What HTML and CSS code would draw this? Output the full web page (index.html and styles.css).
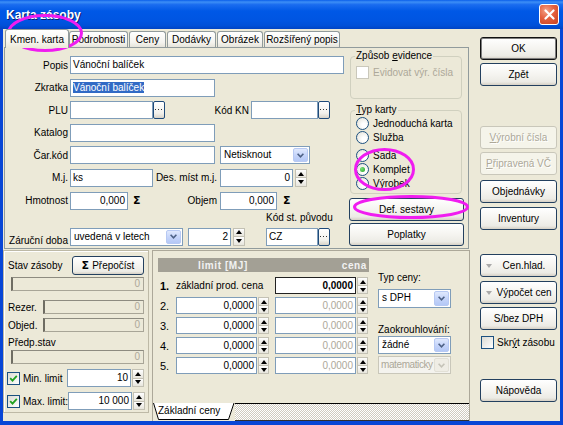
FILE: index.html
```html
<!DOCTYPE html>
<html lang="cs">
<head>
<meta charset="utf-8">
<title>Karta zásoby</title>
<link rel="stylesheet" href="styles.css">
</head>
<body>
<div class="window">
  <div class="titlebar">
    <span class="title">Karta zásoby</span>
    <span class="close"><svg width="11" height="11" viewBox="0 0 11 11"><path d="M1.5 1.5 L9.5 9.5 M9.5 1.5 L1.5 9.5" stroke="#fff" stroke-width="2.2" stroke-linecap="round"/></svg></span>
  </div>
  <div class="client">
    <div class="main">
      <div class="tabs">
        <span class="tab active t1">Kmen. karta</span>
        <span class="tab t2">Podrobnosti</span>
        <span class="tab t3">Ceny</span>
        <span class="tab t4">Dodávky</span>
        <span class="tab t5">Obrázek</span>
        <span class="tab t6">Rozšířený popis</span>
      </div>
      <div class="tabpanel">
        <div class="form">
          <div class="row">
            <span class="lbl">Popis</span>
            <span class="edit w274">Vánoční balíček</span>
          </div>
          <div class="row">
            <span class="lbl">Zkratka</span>
            <span class="edit w145"><span class="sel">Vánoční balíček</span></span>
          </div>
          <div class="row">
            <span class="lbl">PLU</span>
            <span class="edit w83"></span>
            <span class="dots"><svg width="8" height="2" viewBox="0 0 8 2"><rect x="0" y="0" width="1" height="1" fill="#333"/><rect x="3" y="0" width="1" height="1" fill="#333"/><rect x="6" y="0" width="1" height="1" fill="#333"/></svg></span>
            <span class="lbl lbl-kn">Kód KN</span>
            <span class="edit w67"></span>
            <span class="dots"><svg width="8" height="2" viewBox="0 0 8 2"><rect x="0" y="0" width="1" height="1" fill="#333"/><rect x="3" y="0" width="1" height="1" fill="#333"/><rect x="6" y="0" width="1" height="1" fill="#333"/></svg></span>
          </div>
          <div class="row">
            <span class="lbl">Katalog</span>
            <span class="edit w145"></span>
          </div>
          <div class="row">
            <span class="lbl">Čar.kód</span>
            <span class="edit w145"></span>
            <span class="combo w90 ml5"><span class="val">Netisknout</span><span class="dd"><svg width="7" height="5" viewBox="0 0 7 5"><path d="M0.6 0.8 L3.5 3.8 L6.4 0.8" fill="none" stroke="#4D6185" stroke-width="1.6"/></svg></span></span>
          </div>
          <div class="row">
            <span class="lbl">M.j.</span>
            <span class="edit w83">ks</span>
            <span class="lbl lbl-des">Des. míst m.j.</span>
            <span class="edit w73 num">0</span>
            <span class="spin ml2"><i class="up"></i><i class="dn"></i></span>
          </div>
          <div class="row">
            <span class="lbl">Hmotnost</span>
            <span class="edit w58 num">0,000</span>
            <span class="sigma">Σ</span>
            <span class="lbl lbl-obj">Objem</span>
            <span class="edit w57 num">0,000</span>
            <span class="sigma sigma2">Σ</span>
          </div>
          <div class="row row-last">
            <span class="lbl">Záruční doba</span>
            <span class="combo w113"><span class="val">uvedená v letech</span><span class="dd"><svg width="7" height="5" viewBox="0 0 7 5"><path d="M0.6 0.8 L3.5 3.8 L6.4 0.8" fill="none" stroke="#4D6185" stroke-width="1.6"/></svg></span></span>
            <span class="edit w43 num ml5">2</span>
            <span class="spin ml2"><i class="up"></i><i class="dn"></i></span>
            <div class="origin">
              <span class="origin-lbl">Kód st. původu</span>
              <div class="origin-row">
                <span class="edit w52">CZ</span>
                <span class="dots"><svg width="8" height="2" viewBox="0 0 8 2"><rect x="0" y="0" width="1" height="1" fill="#333"/><rect x="3" y="0" width="1" height="1" fill="#333"/><rect x="6" y="0" width="1" height="1" fill="#333"/></svg></span>
              </div>
            </div>
          </div>
        </div>
        <div class="side">
          <fieldset class="group g-evid">
            <legend>Způsob <u>e</u>vidence</legend>
            <div class="opt opt-first dis"><span class="cb cb-dis"></span>Evidovat výr. čísla</div>
          </fieldset>
          <fieldset class="group g-typ">
            <legend><u>T</u>yp karty</legend>
            <div class="opt"><span class="radio"></span>Jednoduchá karta</div>
            <div class="opt"><span class="radio"></span>Služba</div>
            <div class="opt opt-gap"><span class="radio"></span>Sada</div>
            <div class="opt"><span class="radio on"></span>Komplet</div>
            <div class="opt"><span class="radio"></span>Výrobek</div>
          </fieldset>
          <div class="btn side-btn btn-def">Def. sestavy</div>
          <div class="btn side-btn btn-popl">Poplatky</div>
        </div>
      </div>
      <div class="bottom">
        <div class="stock">
          <div class="st-head">
            <span class="st-title">Stav zásoby</span>
            <div class="btn btn-calc"><span class="sigma-s">Σ</span> Přepočíst</div>
          </div>
          <div class="rofield rf-wide">0</div>
          <div class="st-row st-rezer">
            <span class="st-lbl">Rezer.</span>
            <span class="rofield rf-short">0</span>
          </div>
          <div class="st-row st-objed">
            <span class="st-lbl">Objed.</span>
            <span class="rofield rf-short">0</span>
          </div>
          <div class="st-plain">Předp.stav</div>
          <div class="rofield rf-wide rf-pred">0</div>
          <div class="st-limit st-min">
            <span class="cb"><svg width="9" height="9" viewBox="0 0 9 9"><path d="M1.2 4.2 L3.5 6.6 L7.8 1.8" fill="none" stroke="#21A121" stroke-width="1.8"/></svg></span>
            <span class="st-cbl">Min. limit</span>
            <span class="edit w64 num">10</span>
            <span class="spin ml1"><i class="up"></i><i class="dn"></i></span>
          </div>
          <div class="st-limit st-max">
            <span class="cb"><svg width="9" height="9" viewBox="0 0 9 9"><path d="M1.2 4.2 L3.5 6.6 L7.8 1.8" fill="none" stroke="#21A121" stroke-width="1.8"/></svg></span>
            <span class="st-cbl">Max. limit:</span>
            <span class="edit w64 num">10 000</span>
            <span class="spin ml1"><i class="up"></i><i class="dn"></i></span>
          </div>
        </div>
        <div class="prices">
          <div class="pbody">
            <div class="ptable">
              <div class="phead"><span>limit [MJ]</span><span class="ph-cena">cena</span></div>
              <div class="prow prow-first">
                <span class="pn pn-b">1.</span>
                <span class="pbase">základní prod. cena</span>
                <span class="edit w81 num strong">0,0000</span>
                <span class="spin ps ml1"><i class="up"></i><i class="dn"></i></span>
              </div>
              <div class="prow">
                <span class="pn">2.</span>
                <span class="edit w81 num">0,0000</span>
                <span class="spin ps ml1"><i class="up"></i><i class="dn"></i></span>
                <span class="edit w81 num pdis ml6">0,0000</span>
                <span class="spin ps ml1"><i class="up"></i><i class="dn"></i></span>
              </div>
              <div class="prow">
                <span class="pn">3.</span>
                <span class="edit w81 num">0,0000</span>
                <span class="spin ps ml1"><i class="up"></i><i class="dn"></i></span>
                <span class="edit w81 num pdis ml6">0,0000</span>
                <span class="spin ps ml1"><i class="up"></i><i class="dn"></i></span>
              </div>
              <div class="prow">
                <span class="pn">4.</span>
                <span class="edit w81 num">0,0000</span>
                <span class="spin ps ml1"><i class="up"></i><i class="dn"></i></span>
                <span class="edit w81 num pdis ml6">0,0000</span>
                <span class="spin ps ml1"><i class="up"></i><i class="dn"></i></span>
              </div>
              <div class="prow">
                <span class="pn">5.</span>
                <span class="edit w81 num">0,0000</span>
                <span class="spin ps ml1"><i class="up"></i><i class="dn"></i></span>
                <span class="edit w81 num pdis ml6">0,0000</span>
                <span class="spin ps ml1"><i class="up"></i><i class="dn"></i></span>
              </div>
            </div>
            <div class="popts">
              <span class="olbl olbl1">Typ ceny:</span>
              <span class="combo w73 c-dph"><span class="val">s DPH</span><span class="dd"><svg width="7" height="5" viewBox="0 0 7 5"><path d="M0.6 0.8 L3.5 3.8 L6.4 0.8" fill="none" stroke="#4D6185" stroke-width="1.6"/></svg></span></span>
              <span class="olbl olbl2">Zaokrouhlování:</span>
              <span class="combo w73"><span class="val">žádné</span><span class="dd"><svg width="7" height="5" viewBox="0 0 7 5"><path d="M0.6 0.8 L3.5 3.8 L6.4 0.8" fill="none" stroke="#4D6185" stroke-width="1.6"/></svg></span></span>
              <span class="combo w73 c-dis"><span class="val">matematicky</span><span class="dd"><svg width="7" height="5" viewBox="0 0 7 5"><path d="M0.6 0.8 L3.5 3.8 L6.4 0.8" fill="none" stroke="#C5C3B8" stroke-width="1.6"/></svg></span></span>
            </div>
          </div>
          <div class="sheet">
            <span class="sheettab">
              <svg width="82" height="18" viewBox="0 0 82 18"><path d="M0 0 L5 16.5 L76 16.5 L81.5 0 Z" fill="#FFFFFF"/><path d="M0.5 0 L5.5 16.5 L75.5 16.5 L81 0" fill="none" stroke="#000" stroke-width="1"/></svg>
              <span class="sheet-text">Základní ceny</span>
            </span>
            <span class="sh-rest"></span>
          </div>
        </div>
      </div>
    </div>
    <div class="rcol">
      <div class="btn rbtn b-ok">OK</div>
      <div class="btn rbtn b-zpet">Zpět</div>
      <div class="btn rbtn bdis b-vyr"><span><u>V</u>ýrobní čísla</span></div>
      <div class="btn rbtn bdis b-prip"><span><u>P</u>řipravená VČ</span></div>
      <div class="btn rbtn b-obj">Objednávky</div>
      <div class="btn rbtn b-inv">Inventury</div>
      <div class="btn rbtn tri-btn b-cen"><span class="tri"></span><span class="tri-text">Cen.hlad.</span></div>
      <div class="btn rbtn tri-btn b-vyp"><span class="tri"></span><span class="tri-text">Výpočet cen</span></div>
      <div class="btn rbtn b-dph">S/bez DPH</div>
      <div class="chk-row"><span class="cb"></span><span>Skr<u>ý</u>t zásobu</span></div>
      <div class="btn rbtn b-nap">Nápověda</div>
    </div>
  </div>
  <svg class="annot" width="563" height="425" viewBox="0 0 563 425">
    <ellipse cx="45" cy="33" rx="36.5" ry="17.5" fill="none" stroke="#F01CF0" stroke-width="3"/>
    <ellipse cx="384.5" cy="169.5" rx="29" ry="20" fill="none" stroke="#F01CF0" stroke-width="3"/>
    <ellipse cx="411" cy="207" rx="56.5" ry="10.5" fill="none" stroke="#F01CF0" stroke-width="3"/>
  </svg>
</div>
</body>
</html>
```

FILE: styles.css
```css
* { box-sizing: border-box; }
html, body { margin: 0; padding: 0; }
body {
  width: 563px; height: 425px; overflow: hidden;
  font-family: "Liberation Sans", Arial, sans-serif;
  font-size: 10px; color: #000; background: #0843D0;
}
.window {
  position: relative; width: 563px; height: 425px;
  display: flex; flex-direction: column;
  background: #0846D6;
}
/* title bar */
.titlebar {
  flex: none; height: 29px; display: flex; align-items: center;
  padding: 0 4px 0 6px;
  background: linear-gradient(#0A5EEA 0%, #3D8FF6 7%, #1A6CEF 16%, #0058E6 38%, #0055E2 70%, #0050D8 88%, #0044C4 100%);
}
.title {
  flex: 1; color: #fff; font-weight: bold; font-size: 12px;
  text-shadow: 1px 1px 0 #0A1E6E;
}
.close {
  width: 20px; height: 21px; border: 1px solid #fff; border-radius: 3px;
  background: radial-gradient(circle at 35% 30%, #F4A287 0%, #E4603F 45%, #C9411F 100%);
  display: flex; align-items: center; justify-content: center;
}
/* client */
.client {
  flex: 1; display: flex; margin: 0 3px 4px 3px; background: #ECE9D8;
}
.main { width: 467px; flex: none; display: flex; flex-direction: column; }
.tabs { height: 18px; flex: none; display: flex; align-items: flex-end; padding-left: 2px; }
.tab {
  height: 16px; border: 1px solid #919B9C; border-bottom: 0;
  border-radius: 3px 3px 0 0;
  background: linear-gradient(#FFFFFF, #F4F3EE 70%, #E6E4DA);
  display: flex; align-items: center; justify-content: center;
  margin-right: 1px; white-space: nowrap; flex: none;
}
.tab.active {
  height: 19px; margin-bottom: -1px; margin-right: 0;
  position: relative; z-index: 1;
  background: linear-gradient(#FFFFFF, #F7F6F1 60%, #ECE9D8);
}
.t1 { width: 64px; }
.t2 { width: 59px; }
.t3 { width: 37px; }
.t4 { width: 49px; }
.t5 { width: 46px; }
.t6 { width: 76px; }
.tabpanel {
  height: 202px; width: 465px; margin-left: 1px; flex: none;
  border: 1px solid #919B9C; display: flex;
}
/* form */
.form { width: 344px; flex: none; padding-top: 8px; display: flex; flex-direction: column; }
.row { display: flex; align-items: center; height: 18px; flex: none; }
.row + .row { margin-top: 4.6px; }
.form .row-last { margin-top: 1px; height: 35px; align-items: flex-end; }
.lbl { width: 65px; flex: none; text-align: right; padding-right: 2px; white-space: nowrap; }
.lbl-kn { width: 86px; }
.lbl-des { width: 67px; padding-right: 3px; }
.lbl-obj { width: 77px; padding-right: 3px; }
.edit {
  flex: none; height: 18px; border: 1px solid #7F9DB9; background: #fff;
  padding: 0 2px; line-height: 16px; white-space: nowrap; overflow: hidden;
}
.num { text-align: right; padding-right: 2px; }
.w274 { width: 274px; }
.w145 { width: 145px; }
.w83 { width: 83px; }
.w81 { width: 81px; }
.w73 { width: 73px; }
.w67 { width: 67px; }
.w64 { width: 64px; }
.w58 { width: 58px; }
.w57 { width: 57px; }
.w52 { width: 52px; }
.w43 { width: 43px; }
.w90 { width: 90px; }
.w113 { width: 113px; }
.ml1 { margin-left: 1px; }
.ml2 { margin-left: 2px; }
.ml5 { margin-left: 5px; }
.ml6 { margin-left: 6px; }
.sel { background: #316AC5; color: #fff; }
.dots {
  flex: none; width: 12px; height: 18px;
  border: 1px solid #1E4A7A; border-radius: 2px;
  background: linear-gradient(#FFFFFF, #F2F1EC 70%, #D8D3C8);
  display: flex; align-items: center; justify-content: center;
}
.sigma {
  flex: none; width: 10px; margin-left: 5px;
  font-family: "DejaVu Sans", sans-serif; font-weight: bold; font-size: 11px; line-height: 18px;
}
.sigma2 { margin-left: 6px; }
.combo {
  flex: none; display: flex; height: 18px; border: 1px solid #7F9DB9;
  background: #fff; padding: 1px;
}
.combo .val { flex: 1; padding-left: 2px; line-height: 14px; white-space: nowrap; overflow: hidden; }
.combo .dd {
  flex: none; width: 15px; border: 1px solid #B7C9F3; border-radius: 2px;
  background: linear-gradient(#E0E9FD, #C6D5FA 50%, #B4C8F6);
  display: flex; align-items: center; justify-content: center;
}
.spin { flex: none; width: 12px; height: 18px; display: flex; flex-direction: column; }
.spin i {
  flex: 1; border: 1px solid #C3C1B4; background: linear-gradient(#FEFEFE, #E7E5DC);
  display: flex; align-items: center; justify-content: center;
}
.spin i + i { border-top: 0; }
.spin .up::after {
  content: ""; width: 0; height: 0;
  border-left: 3px solid transparent; border-right: 3px solid transparent; border-bottom: 4px solid #000;
}
.spin .dn::after {
  content: ""; width: 0; height: 0;
  border-left: 3px solid transparent; border-right: 3px solid transparent; border-top: 4px solid #000;
}
.origin { margin-left: 21px; display: flex; flex-direction: column; }
.origin-lbl { height: 14px; line-height: 14px; margin-bottom: 3px; white-space: nowrap; }
.origin-row { display: flex; }
/* side */
.side { width: 118px; flex: none; display: flex; flex-direction: column; }
.group {
  margin: 0 0 0 1px; width: 112px; padding: 0 0 0 5px;
  border: 1px solid #D0D0BF; border-radius: 4px; min-width: 0;
}
.group legend { padding: 0 1px; margin-left: -1px; line-height: 12px; }
.g-evid { margin-top: 2px; height: 49px; }
.g-typ { margin-top: 5px; height: 90px; }
.opt { display: flex; align-items: center; height: 14px; gap: 4px; white-space: nowrap; }
.opt-first { margin-top: 4px; height: 13px; }
.opt-gap { margin-top: 4px; }
.dis { color: #ACA899; }
.cb {
  flex: none; width: 13px; height: 13px; border: 1px solid #1C5180;
  background: linear-gradient(135deg, #DCDBD3, #FFFFFF);
  display: flex; align-items: center; justify-content: center;
}
.cb-dis { border-color: #CAC8BB; background: #fff; }
.radio {
  flex: none; width: 13px; height: 13px; border: 1px solid #1C5180; border-radius: 50%;
  background: radial-gradient(circle at 65% 65%, #FFFFFF 20%, #E4E2D8 90%);
  display: flex; align-items: center; justify-content: center;
}
.radio.on::after {
  content: ""; width: 5px; height: 5px; border-radius: 50%;
  background: radial-gradient(circle at 35% 35%, #7AE07A, #21A121);
}
.btn {
  flex: none; display: flex; align-items: center; justify-content: center;
  height: 23px; border: 1px solid #23405F; border-radius: 3px;
  background: linear-gradient(#FFFFFF 0%, #F5F4F0 50%, #ECEBE5 85%, #D6D0C5 100%);
  white-space: nowrap;
}
.side-btn { width: 115px; }
.btn-def { margin-top: 4px; }
.btn-popl { margin-top: 2px; }
/* bottom */
.bottom { flex: 1; display: flex; margin-top: 1px; }
.stock {
  width: 146px; height: 163px; flex: none;
  border: 1px solid #BDB9A6; box-shadow: inset 1px 1px 0 #FFFFFF;
  display: flex; flex-direction: column;
}
.st-head { display: flex; align-items: center; height: 19px; margin-top: 5px; padding-left: 4px; }
.st-title { flex: 1; }
.btn-calc { width: 72px; height: 19px; margin-right: 4px; gap: 3px; }
.sigma-s { font-family: "DejaVu Sans", sans-serif; font-weight: bold; font-size: 11px; }
.rofield {
  height: 14px; border: 1px solid #A8A597; border-left: 2px solid #6F6D63; border-top-color: #8D8B80;
  color: #ACA899; text-align: right; padding-right: 3px; line-height: 12px;
}
.rf-wide { margin: 2px 4px 0 7px; }
.st-row { display: flex; align-items: center; height: 14px; padding-left: 4px; }
.st-rezer { margin-top: 9px; }
.st-objed { margin-top: 4px; }
.st-lbl { flex: 1; }
.rf-short { width: 101px; margin-right: 4px; }
.st-plain { height: 12px; line-height: 12px; margin-top: 5px; padding-left: 4px; }
.rf-pred { margin-top: 1px; }
.st-limit { display: flex; align-items: center; height: 18px; padding-left: 3px; padding-right: 4px; }
.st-min { margin-top: 5px; }
.st-max { margin-top: 5px; }
.st-cbl { flex: 1; margin-left: 3px; white-space: nowrap; }
.prices {
  flex: 1; margin-left: 3px; display: flex; flex-direction: column;
  border: 1px solid #ACA899; border-bottom: 0;
}
.pbody { flex: 1; display: flex; }
.ptable { margin: 7px 0 0 5px; width: 211px; flex: none; }
.phead {
  height: 14px; background: #A3A095; display: flex; align-items: center;
  color: #F2F2F2; font-weight: bold; letter-spacing: 0.6px; padding: 0 2px 0 40px;
}
.ph-cena { margin-left: auto; }
.prow { display: flex; align-items: center; height: 17px; margin-top: 3px; }
.prow-first { margin-top: 5px; }
.pn { width: 18px; flex: none; padding-left: 2px; font-size: 11px; }
.pn-b { font-weight: bold; }
.pbase { width: 99px; flex: none; white-space: nowrap; }
.prow .edit { height: 17px; line-height: 15px; }
.spin.ps { height: 17px; width: 11px; }
.strong { font-weight: bold; border-color: #222; }
.pdis { color: #ACA899; }
.popts { margin-left: 9px; width: 73px; flex: none; display: flex; flex-direction: column; }
.olbl { height: 12px; line-height: 12px; white-space: nowrap; }
.olbl1 { margin-top: 21px; }
.c-dph { margin-top: 5px; height: 19px; }
.olbl2 { margin-top: 16px; }
.c-dis { margin-top: 2px; border-color: #C9C7BA; background: #F4F3EE; color: #ACA899; }
.c-dis .val { padding-left: 1px; letter-spacing: -0.4px; }
.c-dis .dd { border-color: #E2E0D6; background: #EFEDE5; }
.sheet { height: 18px; flex: none; display: flex; }
.sheettab { width: 82px; flex: none; display: grid; }
.sheettab > * { grid-area: 1 / 1; }
.sheet-text { padding-left: 5px; line-height: 16px; white-space: nowrap; }
.sh-rest {
  flex: 1; border-top: 1px solid #000; border-bottom: 1px solid #303030;
  background: repeating-conic-gradient(#FFFFFF 0 25%, #CFCBC0 0 50%) 0 0 / 2px 2px;
}
/* right column */
.rcol { flex: 1; display: flex; flex-direction: column; padding-left: 10px; }
.rbtn { width: 77px; }
.b-ok { margin-top: 8px; border-color: #111; box-shadow: inset 0 0 0 1px #7D7D7D; }
.b-zpet { margin-top: 3px; }
.b-vyr { margin-top: 40px; }
.b-prip { margin-top: 3px; }
.b-obj { margin-top: 5px; }
.b-inv { margin-top: 4px; }
.b-cen { margin-top: 24px; }
.b-vyp { margin-top: 4px; }
.b-dph { margin-top: 3px; }
.b-nap { margin-top: 30px; }
.bdis { border-color: #C9C7BA; background: #F5F4EA; color: #ACA899; text-shadow: 1px 1px 0 #fff; }
.tri-btn { justify-content: flex-start; padding-left: 5px; }
.tri {
  flex: none; width: 0; height: 0;
  border-left: 3px solid transparent; border-right: 3px solid transparent; border-top: 4px solid #A9A9A9;
}
.tri-text { flex: 1; text-align: center; }
.chk-row { display: flex; align-items: center; gap: 3px; height: 13px; margin-top: 6px; padding-left: 1px; white-space: nowrap; }
/* annotations */
.annot { position: absolute; left: 0; top: 0; pointer-events: none; }
```
